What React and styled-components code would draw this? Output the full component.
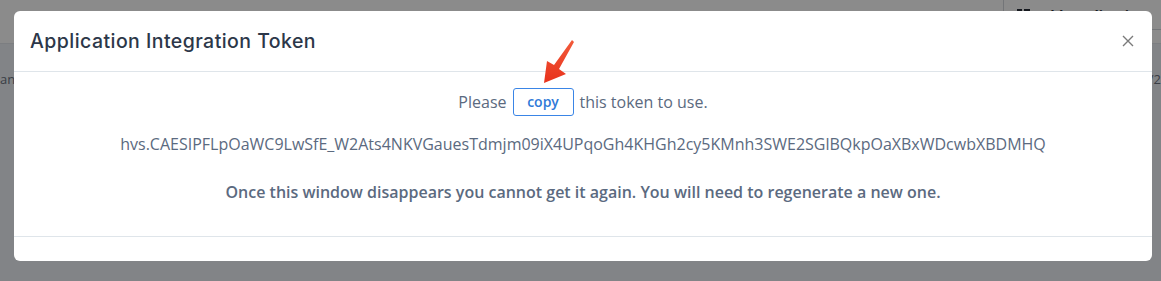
import React from 'react';
import styled, { createGlobalStyle } from 'styled-components';

const GlobalStyle = createGlobalStyle`
  html, body {
    margin: 0;
    padding: 0;
    width: 1161px;
    height: 281px;
    overflow: hidden;
    background: #eef2f8;
  }
  * {
    box-sizing: border-box;
  }
`;

const Page = styled.div`
  width: 1161px;
  height: 281px;
  position: relative;
  font-family: 'Open Sans', 'Liberation Sans', sans-serif;
`;

const TopBar = styled.div`
  height: 44px;
  background: #ffffff;
  display: flex;
  justify-content: flex-end;
  align-items: flex-start;
  border-bottom: 1px solid #e4e7ec;
`;

const AddButton = styled.div`
  margin-top: -10px;
  width: 158px;
  height: 40px;
  border: 1px solid #d4d7dc;
  border-right: none;
  border-radius: 4px 0 0 4px;
  display: flex;
  align-items: center;
  gap: 6px;
  padding: 10px 0 0 13px;
  font-weight: 700;
  font-size: 14px;
  color: #2a2f3a;
  white-space: nowrap;
`;

const Content = styled.div`
  display: flex;
  justify-content: space-between;
  padding: 26px 0 0;
  font-size: 13px;
  color: #6b7280;
`;

const Backdrop = styled.div`
  position: absolute;
  inset: 0;
  background: rgba(0, 0, 0, 0.455);
  padding: 11px 0 0 14px;
`;

const Modal = styled.div`
  width: 1138px;
  background: #fff;
  border-radius: 6px;
  display: flex;
  flex-direction: column;
  overflow: hidden;
  position: relative;
`;

const Header = styled.div`
  height: 61px;
  display: flex;
  align-items: center;
  justify-content: space-between;
  padding: 0 18px 0 16px;
  border-bottom: 1px solid #dfe5ea;
`;

const Title = styled.h5`
  margin: 0;
  font-family: Inter, 'Noto Sans', sans-serif;
  font-weight: 500;
  font-size: 19.5px;
  letter-spacing: 0.45px;
  color: #2c3749;
`;

const Close = styled.button`
  border: none;
  background: none;
  padding: 0;
  width: 12px;
  height: 12px;
  display: flex;
  cursor: pointer;
`;

const Body = styled.div`
  padding: 16px 16px 33px;
  display: flex;
  flex-direction: column;
  align-items: center;
  color: #5b6a80;
  font-size: 16px;
`;

const Line = styled.div`
  display: flex;
  align-items: center;
  line-height: 22px;
  margin-top: ${(p) => p.$top || 0}px;
  font-weight: ${(p) => (p.$bold ? 600 : 400)};
  white-space: nowrap;
`;

const CopyButton = styled.button`
  height: 28px;
  width: 61px;
  margin: 0 6px;
  border: 1px solid #3a85e6;
  border-radius: 3px;
  background: #fff;
  color: #2f7ad8;
  font-family: 'Open Sans', 'Liberation Sans', sans-serif;
  font-weight: 600;
  font-size: 14px;
  padding: 0 0 2px;
  cursor: pointer;
`;

const Footer = styled.div`
  height: 25px;
  border-top: 1px solid #dfe5ea;
`;

const Arrow = styled.svg`
  position: absolute;
  left: 528px;
  top: 27px;
`;

const App = () => {
  return (
    <Page>
      <GlobalStyle />
      <TopBar>
        <AddButton>
          <svg width="13" height="13" viewBox="0 0 13 13">
            <rect x="0" y="0" width="5" height="13" fill="#2a2f3a" />
            <rect x="7" y="0" width="6" height="6" fill="#2a2f3a" />
            <rect x="7" y="7" width="6" height="6" fill="#2a2f3a" />
          </svg>
          Add Application
        </AddButton>
      </TopBar>
      <Content>
        <span>ank</span>
        <span>/2</span>
      </Content>
      <Backdrop>
        <Modal>
          <Header>
            <Title>Application Integration Token</Title>
            <Close aria-label="Close">
              <svg width="12" height="12" viewBox="0 0 12 12">
                <path d="M1 1 L11 11 M11 1 L1 11" stroke="#7a7a7a" strokeWidth="1.4" />
              </svg>
            </Close>
          </Header>
          <Body>
            <Line>
              Please
              <CopyButton>copy</CopyButton>
              this token to use.
            </Line>
            <Line $top={17}>
              hvs.CAESIPFLpOaWC9LwSfE_W2Ats4NKVGauesTdmjm09iX4UPqoGh4KHGh2cy5KMnh3SWE2SGlBQkpOaXBxWDcwbXBDMHQ
            </Line>
            <Line $top={26} $bold>
              Once this window disappears you cannot get it again. You will need to regenerate a new one.
            </Line>
          </Body>
          <Footer />
        </Modal>
      </Backdrop>
      <Arrow width="50" height="60" viewBox="0 0 50 60">
        <defs>
          <linearGradient id="arrowRed" x1="0" y1="0" x2="0" y2="1">
            <stop offset="0" stopColor="#f25a3a" />
            <stop offset="1" stopColor="#e8321c" />
          </linearGradient>
        </defs>
        <path
          d="M44 13 L46 15 L31 42 L38 47 L16 56 L19 34 L26 38 Z"
          fill="url(#arrowRed)"
        />
      </Arrow>
    </Page>
  );
};

export default App;
